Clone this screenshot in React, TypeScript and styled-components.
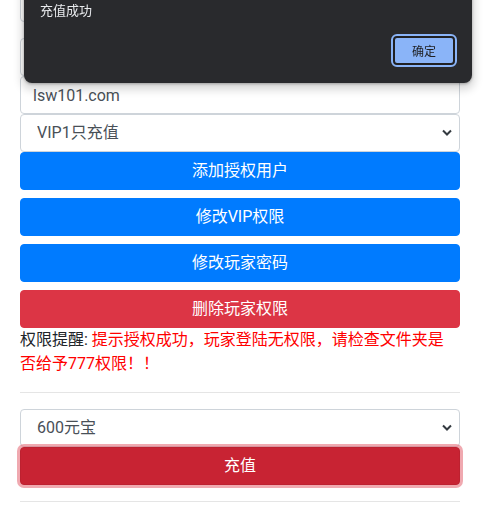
import React from "react";
import styled, { createGlobalStyle } from "styled-components";

const GlobalStyle = createGlobalStyle`
  * {
    box-sizing: border-box;
  }
  body {
    margin: 0;
    background: #fff;
    font-family: Roboto, "Noto Sans CJK SC", "Liberation Sans", sans-serif;
    font-size: 16px;
    line-height: 1.5;
    color: #212529;
    overflow: hidden;
  }
`;

const Page = styled.div`
  width: 440px;
  margin: -16px 20px 0;
  display: flex;
  flex-direction: column;
`;

const Input = styled.input`
  display: block;
  width: 100%;
  height: 38px;
  padding: 6px 12px;
  font: inherit;
  color: #495057;
  background: #fff;
  border: 1px solid #ced4da;
  border-radius: 4px;
  outline: none;
`;

const Group = styled.div`
  margin-bottom: 16px;
`;

const SelectWrap = styled.div`
  position: relative;
`;

const Select = styled.select`
  display: block;
  width: 100%;
  height: 38px;
  padding: 6px 28px 6px 16px;
  font: inherit;
  color: #495057;
  background: #fff;
  border: 1px solid #ced4da;
  border-radius: 4px;
  appearance: none;
  outline: none;
`;

const Chevron = styled.svg`
  position: absolute;
  right: 8px;
  top: 15px;
  width: 10px;
  height: 8px;
  pointer-events: none;
`;

const Button = styled.button<{ $variant: "primary" | "danger" | "dangerActive" }>`
  display: block;
  width: 100%;
  height: 38px;
  margin-bottom: ${(p) => (p.$variant === "primary" ? "8px" : "0")};
  padding: 6px 12px;
  font: inherit;
  color: #fff;
  text-align: center;
  border-radius: 4px;
  cursor: pointer;
  background: ${(p) =>
    p.$variant === "primary"
      ? "#007bff"
      : p.$variant === "danger"
      ? "#dc3545"
      : "#c82333"};
  border: 1px solid
    ${(p) =>
      p.$variant === "primary"
        ? "#007bff"
        : p.$variant === "danger"
        ? "#dc3545"
        : "#bd2130"};
  box-shadow: ${(p) =>
    p.$variant === "dangerActive" ? "0 0 0 3px rgba(225, 83, 97, 0.5)" : "none"};
  position: relative;
`;

const Notice = styled.p`
  margin: 0;
  line-height: 24px;
  padding-right: 2px;
`;

const Red = styled.span`
  color: #ff0000;
`;

const Rule = styled.hr`
  width: 100%;
  margin: 16px 0;
  border: 0;
  border-top: 1px solid rgba(0, 0, 0, 0.1);
`;

const Dialog = styled.div`
  position: fixed;
  left: 24px;
  top: -40px;
  width: 448px;
  height: 123px;
  padding: 40px 15px 16px 16px;
  background: #292a2d;
  border-radius: 8px;
  box-shadow: 0 1px 3px rgba(0, 0, 0, 0.3), 0 4px 8px 3px rgba(0, 0, 0, 0.15);
  display: flex;
  flex-direction: column;
  justify-content: space-between;
  font-family: "Noto Sans CJK SC", Roboto, sans-serif;
`;

const Message = styled.div`
  color: #e8eaed;
  font-size: 13px;
  line-height: 20px;
`;

const Actions = styled.div`
  display: flex;
  justify-content: flex-end;
`;

const OkButton = styled.button`
  width: 62px;
  height: 29px;
  margin: 2px;
  padding: 0;
  font-family: "Noto Sans CJK SC", sans-serif;
  font-size: 12px;
  color: #202124;
  background: #8ab4f8;
  border: 2px solid #202124;
  border-radius: 4px;
  outline: 2px solid #8ab4f8;
  outline-offset: 0;
`;

function ChevronIcon() {
  return (
    <Chevron viewBox="0 0 10 8">
      <path d="M1 1.5 L5 5.5 L9 1.5" fill="none" stroke="#343a40" strokeWidth="2" />
    </Chevron>
  );
}

export default function App() {
  return (
    <>
      <GlobalStyle />
      <Page>
        <Group>
          <Input defaultValue="" />
        </Group>
        <Input defaultValue="" />
        <Input defaultValue="lsw101.com" />
        <SelectWrap>
          <Select defaultValue="vip1">
            <option value="vip1">VIP1只充值</option>
          </Select>
          <ChevronIcon />
        </SelectWrap>
        <Button $variant="primary">添加授权用户</Button>
        <Button $variant="primary">修改VIP权限</Button>
        <Button $variant="primary">修改玩家密码</Button>
        <Button $variant="danger">删除玩家权限</Button>
        <Notice>
          权限提醒:{" "}
          <Red>提示授权成功，玩家登陆无权限，请检查文件夹是否给予777权限！！</Red>
        </Notice>
        <Rule />
        <SelectWrap>
          <Select defaultValue="600">
            <option value="600">600元宝</option>
          </Select>
          <ChevronIcon />
        </SelectWrap>
        <Button $variant="dangerActive">充值</Button>
        <Rule />
      </Page>
      <Dialog>
        <Message>充值成功</Message>
        <Actions>
          <OkButton>确定</OkButton>
        </Actions>
      </Dialog>
    </>
  );
}
